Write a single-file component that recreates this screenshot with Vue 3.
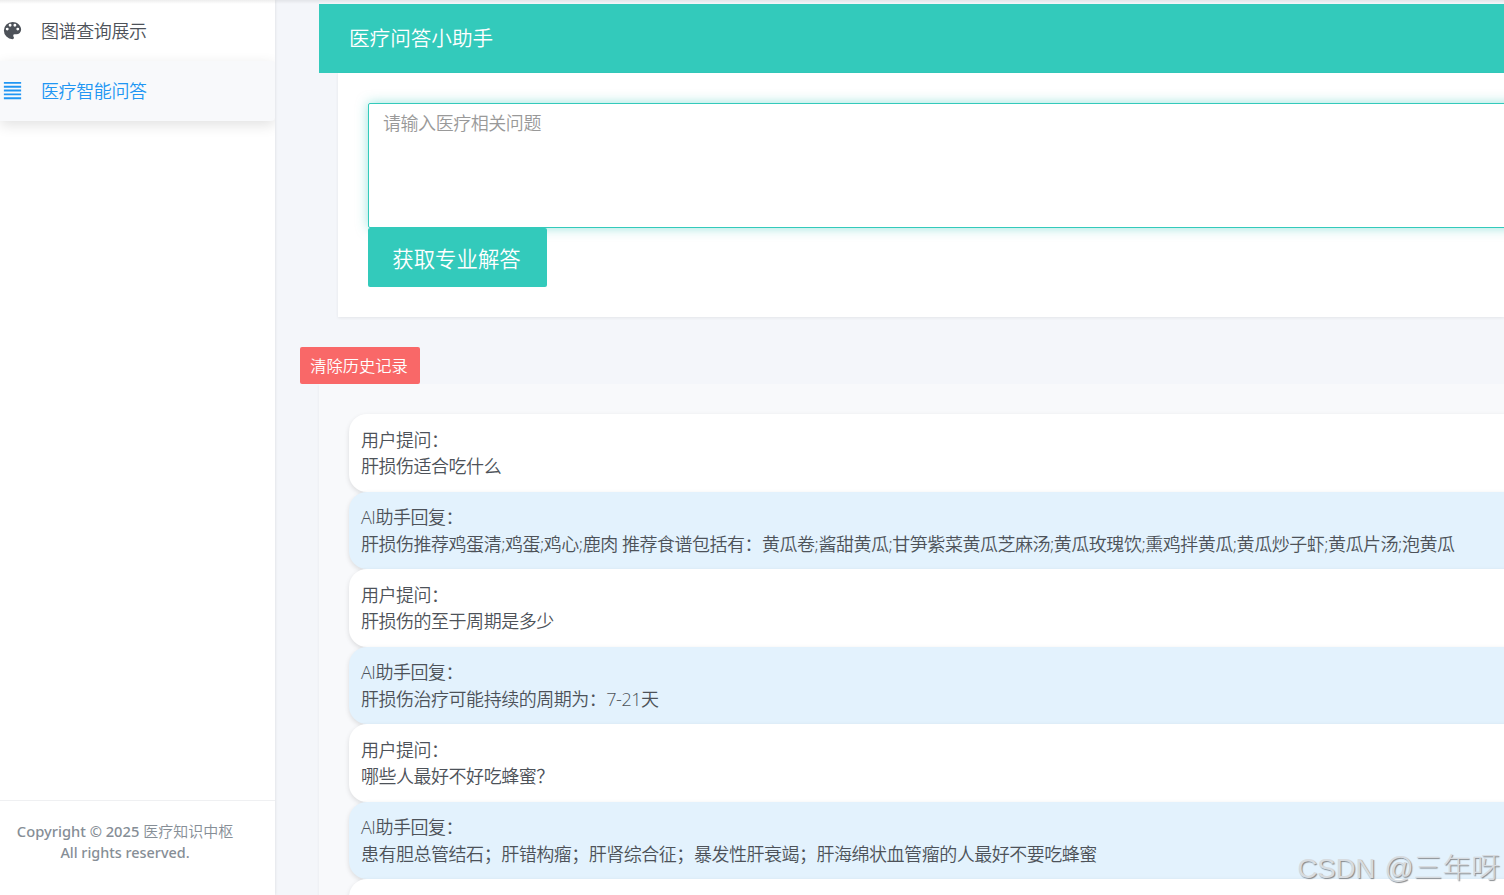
<template>
  <div class="app">
    <!-- SIDEBAR -->
    <aside class="sidebar">
      <nav class="menu">
        <a
          v-for="item in menu"
          :key="item.id"
          href="#"
          class="menu-item"
          :class="{ active: activeMenu === item.id }"
          @click.prevent="activeMenu = item.id"
        >
          <svg class="menu-icon" viewBox="0 0 24 24">
            <path :d="item.icon" fill="currentColor" />
          </svg>
          <span class="menu-text">{{ item.text }}</span>
        </a>
      </nav>
      <footer class="copyright">
        <p>Copyright © 2025 <span class="brand">医疗知识中枢</span></p>
        <p>All rights reserved.</p>
      </footer>
    </aside>

    <!-- MAIN -->
    <main class="main">
      <header class="title-bar">医疗问答小助手</header>
      <section class="ask-card">
        <textarea v-model="question" class="question" placeholder="请输入医疗相关问题"></textarea>
        <button class="btn-ask" @click="ask">获取专业解答</button>
      </section>

      <button class="btn-clear" @click="clearHistory">清除历史记录</button>
      <section class="history">
        <div v-for="(msg, index) in messages" :key="index" class="message" :class="msg.role">
          <template v-if="msg.text">
            <div class="line">{{ msg.role === 'user' ? '用户提问：' : 'AI助手回复：' }}</div>
            <div class="line">{{ msg.text }}</div>
          </template>
        </div>
      </section>
    </main>

    <div class="watermark"><span class="site">CSDN</span>@三年呀</div>
  </div>
</template>

<script setup>
import { ref } from 'vue';

const activeMenu = ref('qa');
const question = ref('');

const menu = [
  {
    id: 'graph',
    text: '图谱查询展示',
    icon: 'M17.5,12A1.5,1.5 0 0,1 16,10.5A1.5,1.5 0 0,1 17.5,9A1.5,1.5 0 0,1 19,10.5A1.5,1.5 0 0,1 17.5,12M14.5,8A1.5,1.5 0 0,1 13,6.5A1.5,1.5 0 0,1 14.5,5A1.5,1.5 0 0,1 16,6.5A1.5,1.5 0 0,1 14.5,8M9.5,8A1.5,1.5 0 0,1 8,6.5A1.5,1.5 0 0,1 9.5,5A1.5,1.5 0 0,1 11,6.5A1.5,1.5 0 0,1 9.5,8M6.5,12A1.5,1.5 0 0,1 5,10.5A1.5,1.5 0 0,1 6.5,9A1.5,1.5 0 0,1 8,10.5A1.5,1.5 0 0,1 6.5,12M12,3A9,9 0 0,0 3,12A9,9 0 0,0 12,21A1.5,1.5 0 0,0 13.5,19.5C13.5,19.11 13.35,18.76 13.11,18.5C12.88,18.23 12.73,17.88 12.73,17.5A1.5,1.5 0 0,1 14.23,16H16A5,5 0 0,0 21,11C21,6.58 16.97,3 12,3Z',
  },
  {
    id: 'qa',
    text: '医疗智能问答',
    icon: 'M3,3H21V5H3V3M3,7H21V9H3V7M3,11H21V13H3V11M3,15H21V17H3V15M3,19H21V21H3V19Z',
  },
];

const messages = ref([
  { role: 'user', text: '肝损伤适合吃什么' },
  {
    role: 'ai',
    text: '肝损伤推荐鸡蛋清;鸡蛋;鸡心;鹿肉 推荐食谱包括有：黄瓜卷;酱甜黄瓜;甘笋紫菜黄瓜芝麻汤;黄瓜玫瑰饮;熏鸡拌黄瓜;黄瓜炒子虾;黄瓜片汤;泡黄瓜',
  },
  { role: 'user', text: '肝损伤的至于周期是多少' },
  { role: 'ai', text: '肝损伤治疗可能持续的周期为：7-21天' },
  { role: 'user', text: '哪些人最好不好吃蜂蜜？' },
  {
    role: 'ai',
    text: '患有胆总管结石；肝错构瘤；肝肾综合征；暴发性肝衰竭；肝海绵状血管瘤的人最好不要吃蜂蜜',
  },
  { role: 'user', text: '' },
]);

const ask = () => {
  if (!question.value.trim()) return;
  messages.value.push({ role: 'user', text: question.value });
  question.value = '';
};

const clearHistory = () => {
  messages.value = [];
};
</script>

<style>
body {
  margin: 0;
  overflow: hidden;
}
</style>

<style scoped>
.app {
  position: relative;
  display: flex;
  height: 100vh;
  overflow: hidden;
  background: #f4f6fa;
  color: #4d5259;
  font-family: "Open Sans", "Noto Sans CJK SC", sans-serif;
  font-weight: 350;
  font-size: 18px;
  letter-spacing: -0.48px;
}

.app::before {
  content: '';
  position: absolute;
  top: 0;
  left: 0;
  right: 0;
  height: 4px;
  background: linear-gradient(rgba(0, 0, 0, 0.07), rgba(0, 0, 0, 0));
  z-index: 2;
}

/* Sidebar */
.sidebar {
  display: flex;
  flex-direction: column;
  flex: 0 0 275px;
  background: #fff;
  box-shadow: 0 0 3px rgba(0, 0, 0, 0.12);
}

.menu {
  flex: 1;
  padding-top: 1px;
  overflow: hidden;
}

.menu-item {
  display: flex;
  align-items: center;
  gap: 17px;
  height: 60px;
  color: #4d5259;
  text-decoration: none;
}

.menu-item.active {
  color: #2196f3;
  background: #f8f9fb;
  border-radius: 0 4px 4px 0;
  box-shadow: 0 4px 14px rgba(0, 0, 0, 0.12);
}

.menu-icon {
  width: 23px;
  height: 23px;
  padding: 0 0 1px 1px;
}

.menu-text {
  padding-bottom: 2px;
  letter-spacing: -0.4px;
}

.copyright {
  box-sizing: border-box;
  height: 95px;
  padding: 19px 25px 0 0;
  border-top: 1px solid #eff0f2;
  color: #868e96;
  font-family: "Noto Sans", "Noto Sans CJK SC", sans-serif;
  font-size: 14.4px;
  font-weight: 500;
  letter-spacing: 0;
  line-height: 22px;
  text-align: center;
}

.copyright p {
  margin: 0;
}

.copyright p:first-child {
  font-size: 14.7px;
}

.copyright .brand {
  font-size: 15px;
  font-weight: 350;
}

/* Main */
.main {
  flex: 1;
  min-width: 0;
  padding: 4px 0 0 25px;
}

.title-bar {
  height: 69px;
  margin-left: 19px;
  padding-left: 30px;
  background: #33cabb;
  color: #fff;
  font-size: 20.6px;
  letter-spacing: 0;
  line-height: 69px;
}

.ask-card {
  box-sizing: border-box;
  height: 244px;
  margin-left: 38px;
  padding: 30px 0 0 30px;
  overflow: hidden;
  background: #fff;
  box-shadow: 0 1px 3px rgba(0, 0, 0, 0.07);
}

.question {
  display: block;
  box-sizing: border-box;
  width: calc(100% + 30px);
  height: 125px;
  padding: 6px 14px;
  border: 1px solid #33cabb;
  border-radius: 2px;
  outline: none;
  resize: none;
  box-shadow: 0 0 12px rgba(51, 202, 187, 0.5);
  font: inherit;
  letter-spacing: -0.45px;
  line-height: 26px;
}

.question::placeholder {
  color: #999;
}

.btn-ask,
.btn-clear {
  display: block;
  border: none;
  border-radius: 2px;
  color: #fff;
  font-family: inherit;
  font-weight: 350;
  letter-spacing: 0;
}

.btn-ask {
  position: relative;
  width: 179px;
  height: 59px;
  padding: 0 2px 0 0;
  background: #33cabb;
  font-size: 21.4px;
}

.btn-clear {
  width: 120px;
  height: 37px;
  margin-top: 30px;
  padding: 0 2px 2px 0;
  background: #f96868;
  font-size: 16.3px;
}

.history {
  height: 600px;
  margin-left: 19px;
  padding: 30px 0 0 30px;
  background: #f8f9fb;
  box-shadow: -1px 1px 2px rgba(0, 0, 0, 0.03);
}

.message {
  box-sizing: border-box;
  height: 77.5px;
  margin-right: -30px;
  padding: 12.6px 12px 0;
  border-radius: 18px;
  background: #fff;
  box-shadow: 0 2px 5px rgba(0, 0, 0, 0.12);
  line-height: 26px;
  white-space: nowrap;
}

.message.ai {
  padding-top: 12px;
  background: #e3f2fd;
  line-height: 27px;
}

/* Watermark */
.watermark {
  position: absolute;
  right: 4px;
  bottom: 5px;
  color: #d7dbdf;
  font-family: "Liberation Sans", "Noto Sans CJK SC", sans-serif;
  font-size: 28.8px;
  font-weight: 300;
  letter-spacing: 0;
  line-height: 42px;
  text-shadow: 1px 1px 1px #85898d;
}

.site {
  margin-right: 9px;
  font-size: 27.5px;
}
</style>
